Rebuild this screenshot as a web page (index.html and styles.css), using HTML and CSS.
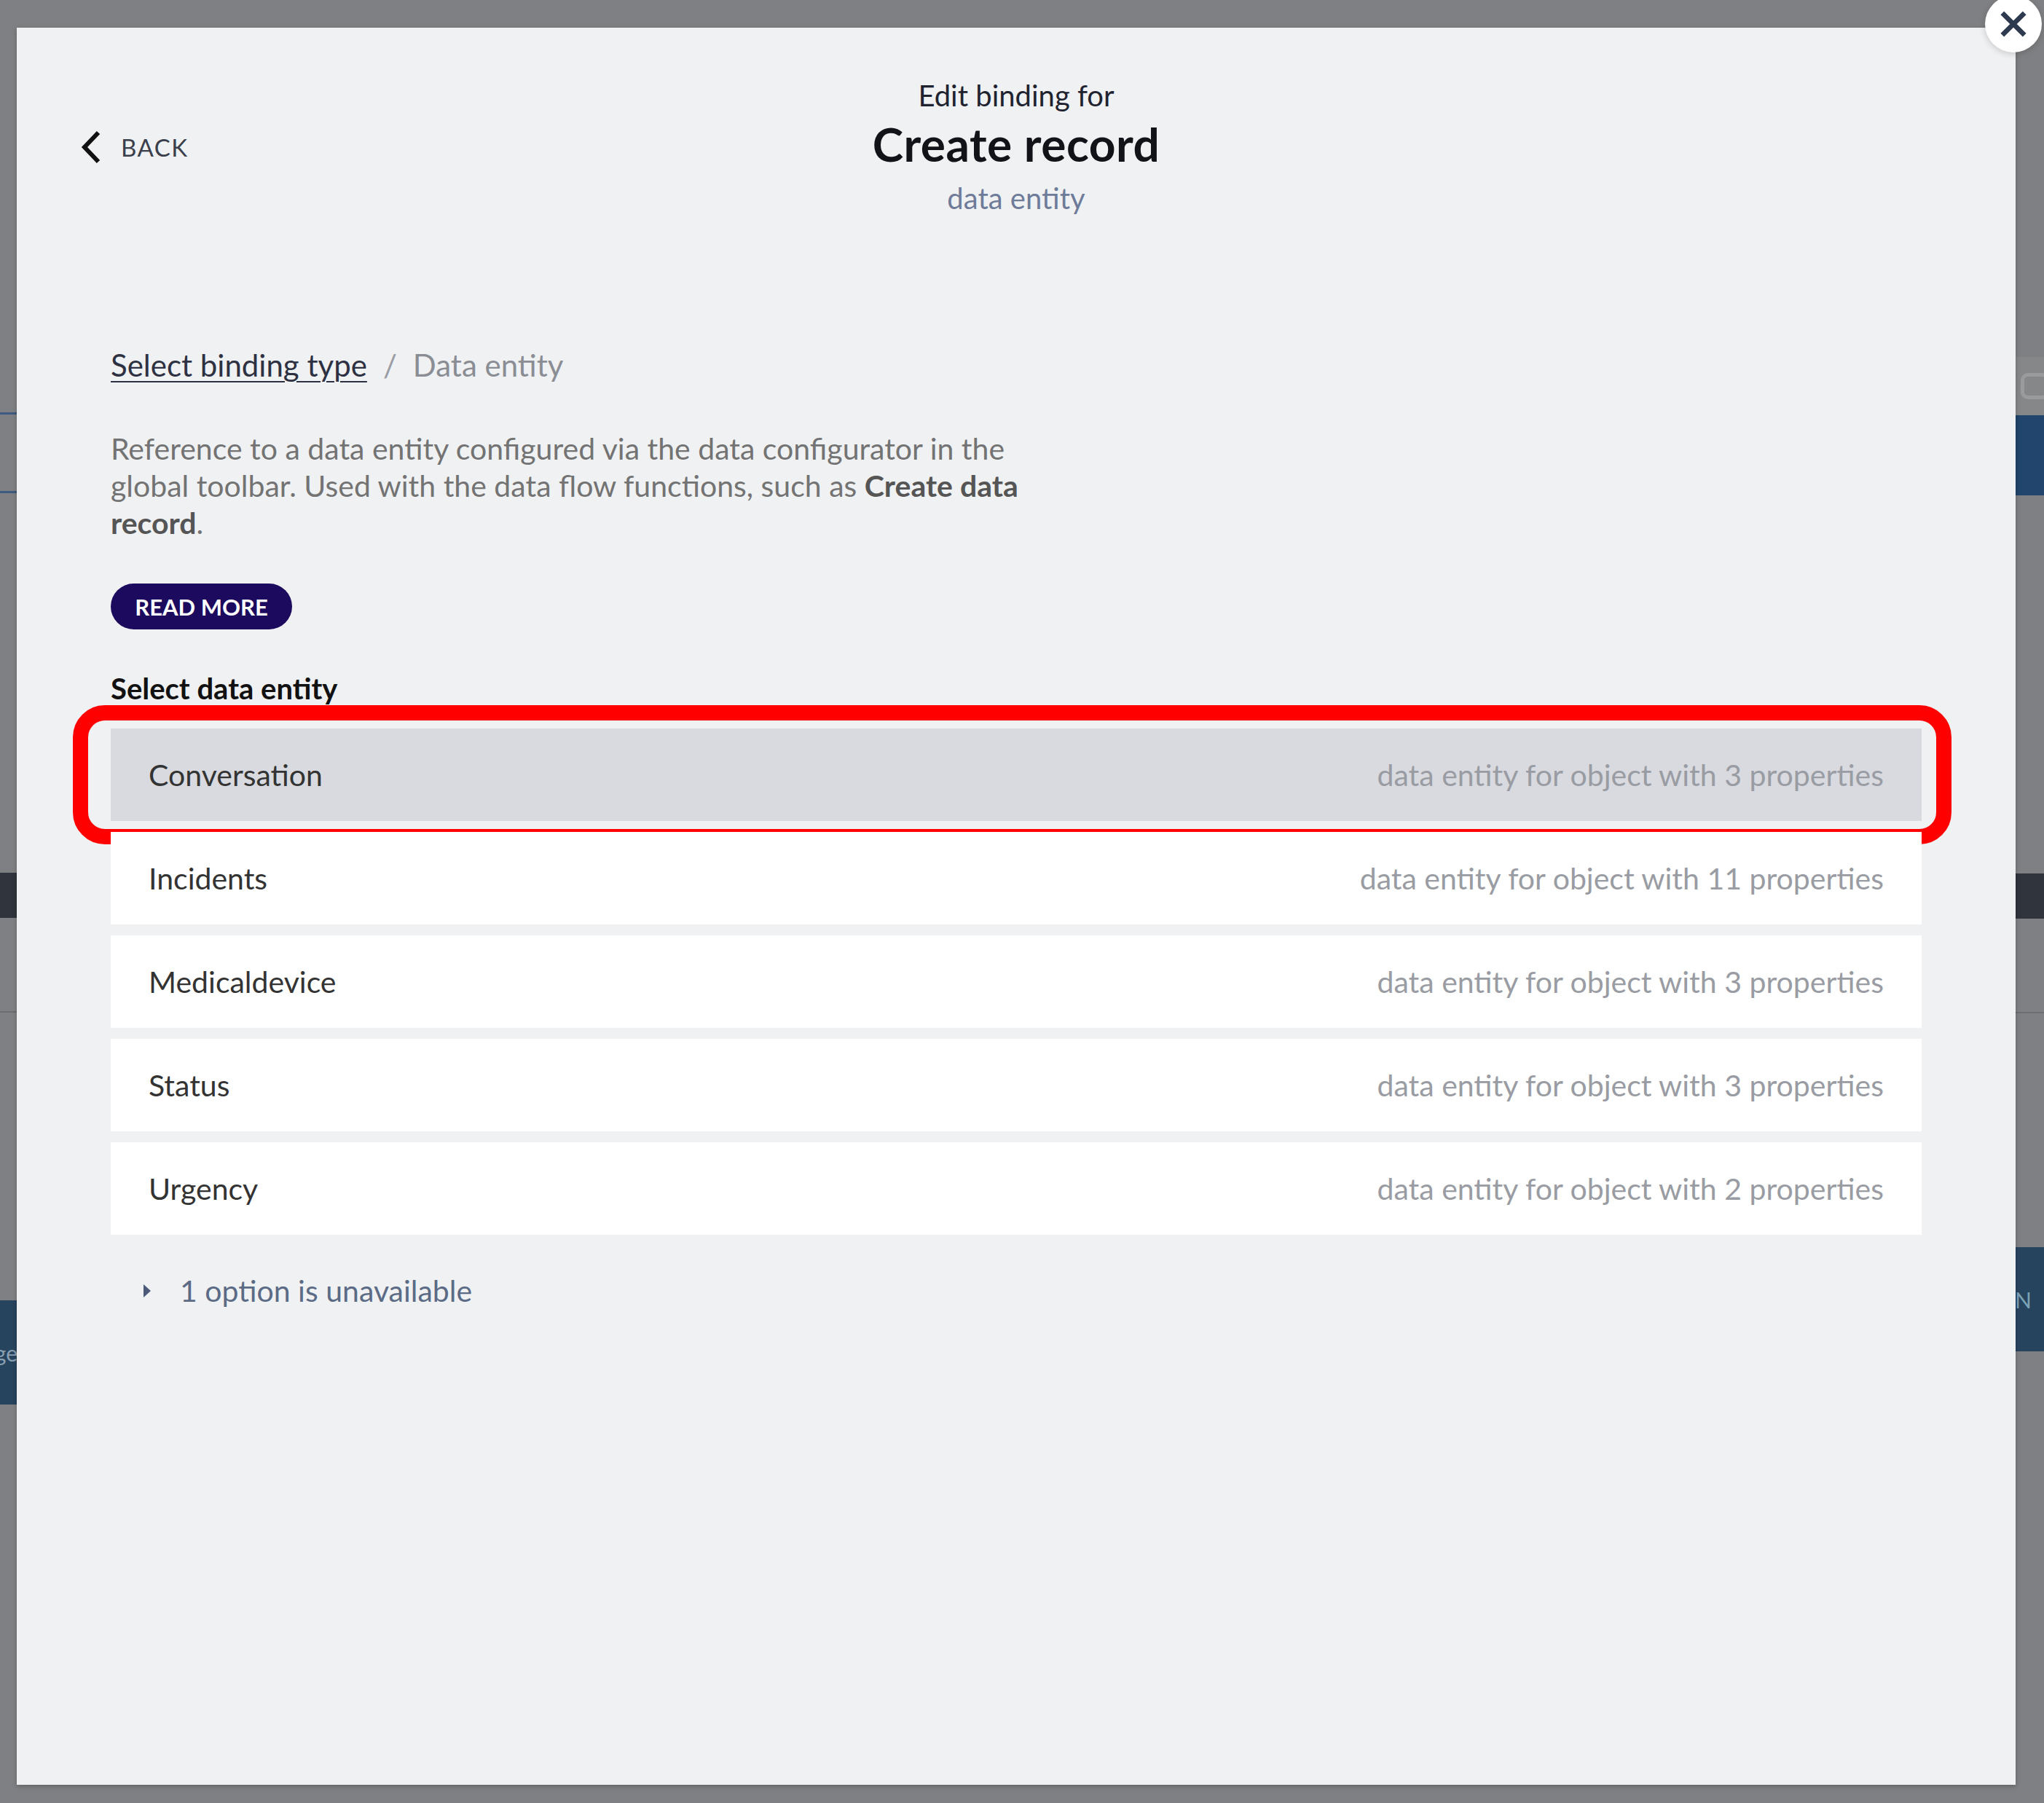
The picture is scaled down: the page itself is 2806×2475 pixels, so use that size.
FILE: index.html
```html
<!DOCTYPE html>
<html lang="en">
<head>
<meta charset="utf-8">
<title>Edit binding for Create record</title>
<link rel="stylesheet" href="styles.css">
</head>
<body>
<div class="backdrop">
  <div class="edge edge-left">
    <div class="bl-line l1"></div>
    <div class="bl-line l2"></div>
    <div class="dark-band lb"></div>
    <div class="thin-line lt"></div>
    <div class="blue-block lbb"><span>ge</span></div>
  </div>
  <div class="edge edge-right">
    <div class="light-band"><span class="pill-shape"></span></div>
    <div class="blue-band"></div>
    <div class="dark-band rb"></div>
    <div class="thin-line rt"></div>
    <div class="blue-block rbb"><span>N</span></div>
  </div>
</div>

<div class="modal">
  <button class="close" aria-label="Close">
    <svg viewBox="0 0 40 40" width="40" height="40"><path d="M4 4 L36 36 M36 4 L4 36" stroke="#2e3a4f" stroke-width="7" stroke-linecap="butt" fill="none"/></svg>
  </button>

  <header class="header">
    <div class="back">
      <svg class="chev" viewBox="0 0 30 46" width="30" height="46"><path d="M25 3 L6 23 L25 43" stroke="#111" stroke-width="6" fill="none"/></svg>
      <span class="back-text">BACK</span>
    </div>
    <div class="titles">
      <div class="pre-title">Edit binding for</div>
      <h1 class="title">Create record</h1>
      <div class="sub-title">data entity</div>
    </div>
    <div class="spacer"></div>
  </header>

  <main class="content">
    <nav class="crumbs">
      <a class="crumb-link">Select binding type</a>
      <span class="crumb-sep">/</span>
      <span class="crumb-current">Data entity</span>
    </nav>

    <p class="desc">Reference to a data entity configured via the data configurator in the global toolbar. Used with the data flow functions, such as <b>Create data record</b>.</p>

    <button class="read-more">READ MORE</button>

    <h2 class="label">Select data entity</h2>

    <ul class="entities">
      <li class="entity selected">
        <span class="name">Conversation</span><span class="meta">data entity for object with 3 properties</span>
        <span class="highlight"></span>
      </li>
      <li class="entity"><span class="name">Incidents</span><span class="meta">data entity for object with 11 properties</span></li>
      <li class="entity"><span class="name">Medicaldevice</span><span class="meta">data entity for object with 3 properties</span></li>
      <li class="entity"><span class="name">Status</span><span class="meta">data entity for object with 3 properties</span></li>
      <li class="entity"><span class="name">Urgency</span><span class="meta">data entity for object with 2 properties</span></li>
    </ul>

    <div class="unavailable">
      <span class="tri"></span>
      <span class="unavail-text">1 option is unavailable</span>
    </div>
  </main>
</div>
</body>
</html>
```

FILE: styles.css
```css
* { box-sizing: border-box; }
html, body { margin: 0; padding: 0; }
body {
  width: 2806px;
  height: 2475px;
  background: #7f8083;
  font-family: Lato, "Liberation Sans", sans-serif;
  overflow: hidden;
  position: relative;
}

/* dimmed page behind the modal */
.backdrop {
  display: flex;
  justify-content: space-between;
  height: 2475px;
}
.edge { display: flex; flex-direction: column; overflow: hidden; }
.edge-left { width: 24px; }
.edge-right { width: 40px; }
.bl-line { height: 3px; background: #3d5a80; }
.l1 { margin-top: 566px; }
.l2 { margin-top: 105px; }
.dark-band { height: 62px; background: #30343c; }
.lb { margin-top: 521px; }
.thin-line { height: 2px; background: #6c6d70; }
.lt { margin-top: 128px; }
.blue-block {
  background: #27445e;
  color: #8aa0b3;
  font-size: 30px;
  display: flex;
  align-items: center;
  overflow: hidden;
  white-space: nowrap;
}
.lbb { margin-top: 395px; height: 143px; justify-content: flex-end; }
.rbb { margin-top: 321px; height: 143px; }
.rbb span { color: #7aa2b5; }
.light-band {
  margin-top: 490px;
  height: 80px;
  background: #868789;
  display: flex;
  align-items: center;
  padding-left: 8px;
}
.pill-shape {
  width: 40px;
  height: 36px;
  border: 5px solid #9a9b9d;
  border-radius: 10px;
  flex: none;
}
.blue-band { height: 110px; background: #21456c; }
.rb { margin-top: 519px; }
.rt { margin-top: 128px; }

/* modal */
.modal {
  position: absolute;
  left: 23px;
  top: 38px;
  width: 2744px;
  height: 2412px;
  background: #f0f1f3;
  box-shadow: 0 2px 6px rgba(0,0,0,0.25);
}
.close {
  position: absolute;
  right: -36px;
  top: -44px;
  width: 78px;
  height: 78px;
  border-radius: 50%;
  border: none;
  background: #ffffff;
  box-shadow: 0 2px 10px rgba(0,0,0,0.18);
  display: flex;
  align-items: center;
  justify-content: center;
  padding: 0;
}
.close svg { width: 38px; height: 38px; }

.header {
  display: grid;
  grid-template-columns: 1fr auto 1fr;
  align-items: center;
  padding: 70px 87px 0;
}
.back {
  display: flex;
  align-items: center;
  gap: 26px;
}
.chev { width: 30px; height: 46px; }
.back-text {
  font-size: 33px;
  letter-spacing: 1.5px;
  color: #3a3f4b;
}
.titles { text-align: center; }
.pre-title {
  font-size: 40px;
  line-height: 46px;
  color: #1f2330;
}
.title {
  margin: 8px 0 0;
  font-size: 64px;
  line-height: 72px;
  font-weight: 700;
  color: #111318;
  letter-spacing: 0.5px;
}
.sub-title {
  margin-top: 15px;
  font-size: 40px;
  line-height: 46px;
  color: #6e7c99;
}

.content { padding: 0 129px; }
.crumbs {
  margin-top: 183px;
  font-size: 42px;
  line-height: 46px;
  display: flex;
}
.crumb-link {
  color: #2d3142;
  text-decoration: underline;
  text-underline-offset: 6px;
  text-decoration-thickness: 2px;
}
.crumb-sep { color: #999ca3; margin: 0 22px; }
.crumb-current { color: #8a8d94; }

.desc {
  margin: 66px 0 0;
  width: 1300px;
  font-size: 41px;
  line-height: 51px;
  color: #737373;
}
.desc b { color: #555555; font-weight: 700; }

.read-more {
  margin-top: 58px;
  height: 63px;
  width: 249px;
  border: none;
  border-radius: 32px;
  background: #1c0a5e;
  color: #ffffff;
  font-family: inherit;
  font-size: 31px;
  font-weight: 700;
  padding: 0;
  display: block;
}

.label {
  margin: 58px 0 0;
  font-size: 40px;
  line-height: 46px;
  font-weight: 700;
  color: #111111;
}

.entities {
  list-style: none;
  margin: 32px 0 0;
  padding: 0;
  display: flex;
  flex-direction: column;
  gap: 15px;
}
.entity {
  position: relative;
  height: 127px;
  background: #ffffff;
  display: flex;
  align-items: center;
  justify-content: space-between;
  padding: 0 52px;
  font-size: 41px;
}
.entity.selected { background: #d8dadf; }
.name { color: #333333; }
.meta { color: #9a9ca3; }
.highlight {
  position: absolute;
  left: -52px;
  top: -32px;
  right: -41px;
  bottom: -32px;
  border: 21px solid #ff0000;
  border-radius: 44px;
  pointer-events: none;
}

.unavailable {
  margin-top: 54px;
  display: flex;
  align-items: center;
  font-size: 41px;
  line-height: 46px;
  padding-left: 45px;
}
.tri {
  width: 0;
  height: 0;
  border-top: 9px solid transparent;
  border-bottom: 9px solid transparent;
  border-left: 10px solid #4a5a78;
  margin-right: 40px;
}
.unavail-text { color: #5b6b85; }
```
